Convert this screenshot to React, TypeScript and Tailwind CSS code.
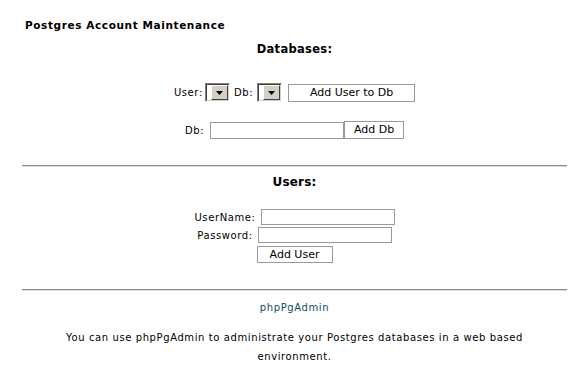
import React from "react";

const font = "font-['DejaVu_Sans',Verdana,sans-serif]";

const FakeSelect: React.FC = () => (
  <div className="flex h-[19px] w-[25px] border border-t-[#808080] border-l-[#808080] border-b-white border-r-white bg-white">
    <div className="flex h-full w-full border border-t-[#404040] border-l-[#404040] border-b-[#d4d0c8] border-r-[#d4d0c8]">
      <div className="w-[4px]" />
      <div className="flex flex-1 items-center justify-center border border-t-white border-l-white border-b-[#404040] border-r-[#404040] bg-[#d4d0c8]">
        <svg width="7" height="4" viewBox="0 0 7 4">
          <path d="M0 0h7L3.5 4z" fill="#000" />
        </svg>
      </div>
    </div>
  </div>
);

const Hr: React.FC = () => (
  <div className="w-full border-t border-t-[#8a8a8a] border-b border-b-[#dcdcd4]" />
);

const App: React.FC = () => {
  return (
    <div className={`min-h-[374px] w-[581px] bg-white text-black ${font}`}>
      <div className="ml-[22px] w-[545px] pt-[18px]">
        <h1 className="pl-[3px] text-[10.5px] font-bold leading-[14px] tracking-[0.6px]">
          Postgres Account Maintenance
        </h1>
        <h2 className="mt-[9px] text-center text-[11.5px] font-bold leading-[16px] tracking-[0.3px]">
          Databases:
        </h2>

        <div className="mt-[26px] flex items-center justify-center text-[10px] tracking-[0.6px]">
          <span className="mr-[2px]">User:</span>
          <FakeSelect />
          <span className="ml-[4px] mr-[4px]">Db:</span>
          <FakeSelect />
          <button className="ml-[6px] h-[18px] w-[127px] border border-[#9a9a9a] bg-white text-[11px] leading-[16px] tracking-normal">
            Add User to Db
          </button>
        </div>

        <div className="mt-[19px] flex items-center justify-center text-[10px] tracking-[0.6px]">
          <span className="mr-[6px]">Db:</span>
          <input className="h-[17px] w-[134px] border border-[#9a9a9a] bg-white outline-none" />
          <button className="h-[18px] w-[60px] border border-[#9a9a9a] bg-white text-[11px] leading-[16px] tracking-normal">
            Add Db
          </button>
        </div>

        <div className="mt-[26px]">
          <Hr />
        </div>

        <h2 className="mt-[7px] text-center text-[12px] font-bold leading-[16px] tracking-[0.2px]">
          Users:
        </h2>

        <div className="mt-[19px] flex flex-col items-center text-[10px] tracking-[0.6px]">
          <div className="flex items-center">
            <span className="mr-[5px]">UserName:</span>
            <input className="h-[16px] w-[134px] border border-[#9a9a9a] bg-white outline-none" />
          </div>
          <div className="mt-[2px] flex items-center">
            <span className="mr-[5px]">Password:</span>
            <input className="h-[16px] w-[134px] border border-[#9a9a9a] bg-white outline-none" />
          </div>
          <button className="mt-[3px] h-[17px] w-[76px] border border-[#9a9a9a] bg-white text-[11px] leading-[15px] tracking-normal">
            Add User
          </button>
        </div>

        <div className="mt-[26px]">
          <Hr />
        </div>

        <div className="mt-[10px] text-center text-[10px] leading-[14px] tracking-[0.6px]">
          <a className="text-[#0d4e5c]">phpPgAdmin</a>
        </div>

        <p className="mx-auto mt-[13px] w-[480px] text-center text-[10px] leading-[19px] tracking-[0.6px]">
          You can use phpPgAdmin to administrate your Postgres databases in a web based environment.
        </p>
      </div>
    </div>
  );
};

export default App;
